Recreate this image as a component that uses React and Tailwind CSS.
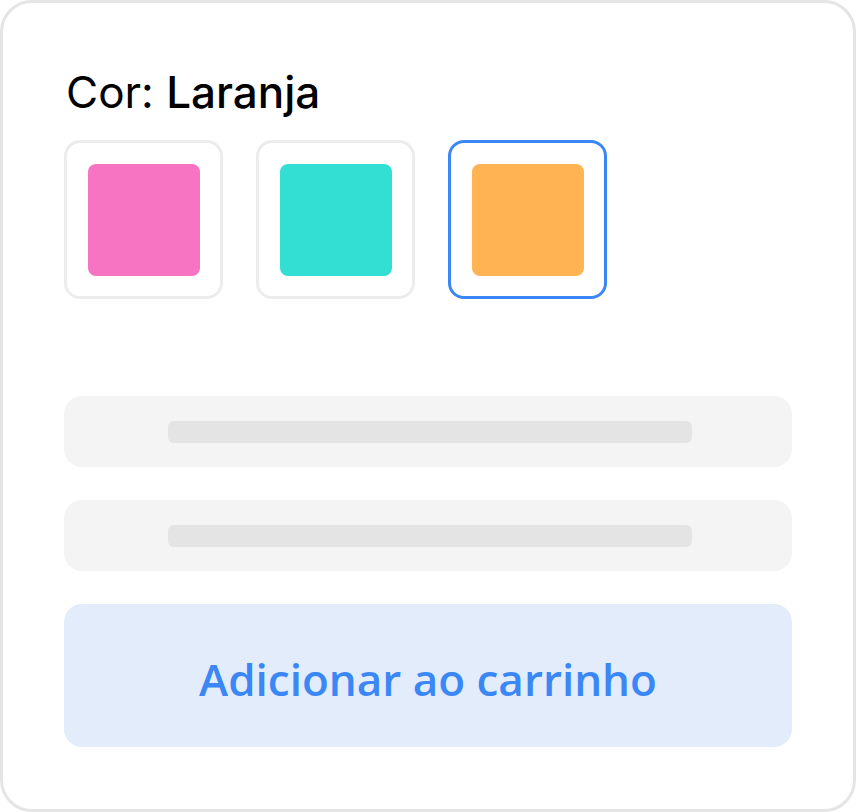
import React, { useState } from 'react';

const colors = [
    { name: 'Rosa', hex: 'bg-[#f774c2]' },
    { name: 'Turquesa', hex: 'bg-[#33dfd3]' },
    { name: 'Laranja', hex: 'bg-[#ffb352]' },
];

const App = () => {
    const [selected, setSelected] = useState(2);

    return (
        <div className="w-[856px] h-[812px] bg-white" style={{ fontFamily: '"Open Sans", sans-serif' }}>
            <div className="w-full h-full border-[3px] border-[#e5e5e5] rounded-[32px] px-[61px] pt-[64px]">
                <h1 className="text-[44px] leading-[50px] text-black pl-[2px] font-[Inter]">
                    Cor: <span className="font-medium">{colors[selected].name}</span>
                </h1>
                <div className="flex gap-[33px] mt-[23px]">
                    {colors.map((c, i) => (
                        <button
                            key={c.name}
                            onClick={() => setSelected(i)}
                            className={`w-[159px] h-[159px] rounded-[16px] border-[3px] flex items-center justify-center ${
                                i === selected ? 'border-[#3b87f5]' : 'border-[#ececec]'
                            }`}
                        >
                            <div className={`w-[112px] h-[112px] rounded-[8px] ${c.hex}`} />
                        </button>
                    ))}
                </div>
                {/* placeholder rows */}
                <div className="flex flex-col gap-[33px] mt-[97px]">
                    <div className="h-[71px] rounded-[18px] bg-[#f4f4f4] flex items-center pl-[104px]">
                        <div className="w-[524px] h-[22px] rounded-[6px] bg-[#e4e4e4]" />
                    </div>
                    <div className="h-[71px] rounded-[18px] bg-[#f4f4f4] flex items-center pl-[104px]">
                        <div className="w-[524px] h-[22px] rounded-[6px] bg-[#e4e4e4]" />
                    </div>
                    <button className="h-[143px] rounded-[18px] bg-[#e2ecfb] text-[#3b87f5] text-[44px] font-semibold pt-[6px]">
                        Adicionar ao carrinho
                    </button>
                </div>
            </div>
        </div>
    );
};

export default App;
